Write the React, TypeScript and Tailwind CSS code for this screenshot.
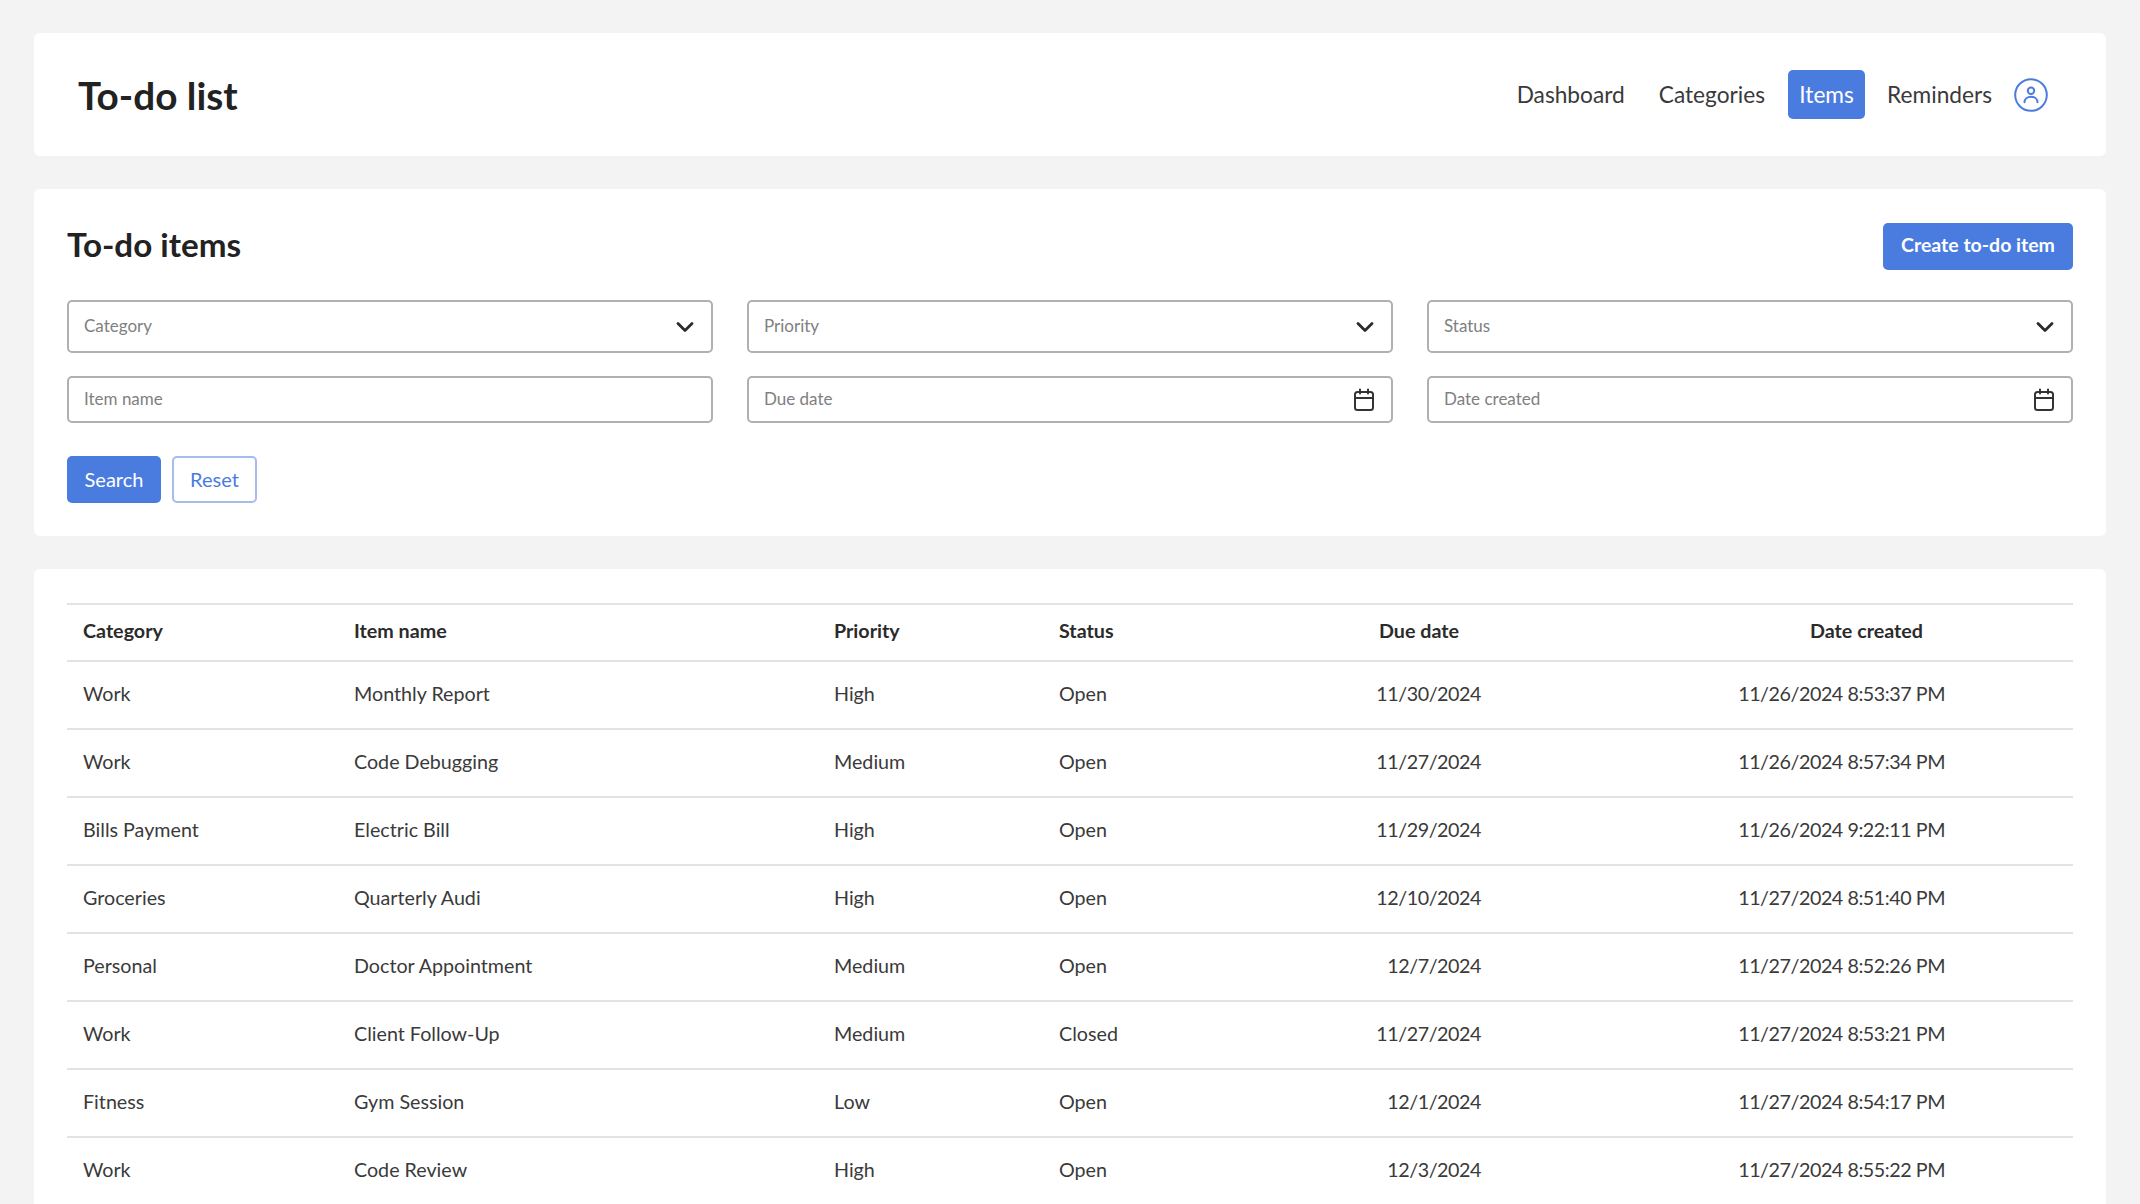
import { ChevronDown } from 'lucide-react'

const rows = [
  ['Work', 'Monthly Report', 'High', 'Open', '11/30/2024', '11/26/2024 8:53:37 PM'],
  ['Work', 'Code Debugging', 'Medium', 'Open', '11/27/2024', '11/26/2024 8:57:34 PM'],
  ['Bills Payment', 'Electric Bill', 'High', 'Open', '11/29/2024', '11/26/2024 9:22:11 PM'],
  ['Groceries', 'Quarterly Audi', 'High', 'Open', '12/10/2024', '11/27/2024 8:51:40 PM'],
  ['Personal', 'Doctor Appointment', 'Medium', 'Open', '12/7/2024', '11/27/2024 8:52:26 PM'],
  ['Work', 'Client Follow-Up', 'Medium', 'Closed', '11/27/2024', '11/27/2024 8:53:21 PM'],
  ['Fitness', 'Gym Session', 'Low', 'Open', '12/1/2024', '11/27/2024 8:54:17 PM'],
  ['Work', 'Code Review', 'High', 'Open', '12/3/2024', '11/27/2024 8:55:22 PM'],
]

function CalendarIcon() {
  return (
    <svg viewBox="0 0 22 24" className="w-[22px] h-6 text-[#333]" fill="none" stroke="currentColor" strokeWidth="2" strokeLinecap="round">
      <rect x="2" y="4" width="18" height="18" rx="2.5" />
      <path d="M2 10h18M7 1.500v4M15 1.500v4" />
    </svg>
  )
}

function UserIcon() {
  return (
    <svg viewBox="0 0 34 34" className="w-[34px] h-[34px] text-[#4a7cdf]" fill="none" stroke="currentColor" strokeWidth="2" strokeLinecap="round">
      <circle cx="17" cy="17" r="15.8" />
      <circle cx="17" cy="12.700" r="3.200" />
      <path d="M10.500 24.300c0-3.500 3-5.500 6.500-5.500s6.500 2 6.500 5.500" />
    </svg>
  )
}

function SelectBox({ label }: { label: string }) {
  return (
    <div className="h-[53px] flex items-center justify-between pl-[15px] pr-[12px] bg-white border-2 border-[#b0b0b0] rounded-[5px]">
      <span className="text-[17px] text-[#808080] pb-px">{label}</span>
      <ChevronDown className="w-7 h-7 text-[#2b2b2b]" strokeWidth={2.4} />
    </div>
  )
}

function InputBox({ label, calendar }: { label: string; calendar?: boolean }) {
  return (
    <div className="h-[47px] flex items-center justify-between pl-[15px] pr-[16px] bg-white border-2 border-[#b0b0b0] rounded-[5px]">
      <span className="text-[17px] text-[#808080] pb-px">{label}</span>
      {calendar && <CalendarIcon />}
    </div>
  )
}

export default function App() {
  return (
    <div className="h-screen overflow-hidden bg-[#f3f3f3] px-[34px] pt-[33px] flex flex-col gap-[33px] text-[#3a3a3a] font-['Lato',sans-serif]">
      <header className="h-[123px] shrink-0 bg-white rounded-[6px] flex items-center justify-between pl-[44px] pr-[58px]">
        <h1 className="text-[38.7px] font-bold text-[#222] pt-px">To-do list</h1>
        <nav className="flex items-center text-[22.7px]">
          <a className="mr-[34px] pt-[2px]">Dashboard</a>
          <a className="mr-[23px] pt-[2px]">Categories</a>
          <a className="mr-[22px] h-[49px] w-[77px] pt-[2px] flex items-center justify-center bg-[#4a7cdf] text-white rounded-[5px]">Items</a>
          <a className="mr-[22px] pt-[2px]">Reminders</a>
          <UserIcon />
        </nav>
      </header>

      <section className="h-[347px] shrink-0 bg-white rounded-[6px] px-[33px] pt-[34px]">
        <div className="flex items-center justify-between h-[47px]">
          <h2 className="text-[33.2px] font-bold text-[#222] pb-[4px]">To-do items</h2>
          <button className="h-[47px] w-[190px] pb-[3px] bg-[#4a7cdf] text-white text-[19.5px] font-bold rounded-[5px]">Create to-do item</button>
        </div>
        <div className="grid grid-cols-3 gap-x-[34px] gap-y-[23px] mt-[30px]">
          <SelectBox label="Category" />
          <SelectBox label="Priority" />
          <SelectBox label="Status" />
          <InputBox label="Item name" />
          <InputBox label="Due date" calendar />
          <InputBox label="Date created" calendar />
        </div>
        <div className="flex gap-[11px] mt-[33px]">
          <button className="h-[47px] w-[94px] pb-[2px] bg-[#4a7cdf] text-white text-[20px] rounded-[5px]">Search</button>
          <button className="h-[47px] w-[85px] pb-[2px] bg-white border-2 border-[#a5bcec] text-[#4a7cdf] text-[20px] rounded-[5px]">Reset</button>
        </div>
      </section>

      <section className="flex-1 bg-white rounded-t-[6px] px-[33px] pt-[34px]">
        <table className="w-full table-fixed border-collapse text-[19.7px]">
          <colgroup>
            <col className="w-[270px]" />
            <col className="w-[481px]" />
            <col className="w-[224px]" />
            <col className="w-[299px]" />
            <col className="w-[156px]" />
            <col />
          </colgroup>
          <thead>
            <tr className="h-[57px] border-y-2 border-[#e3e3e3] text-[#2b2b2b]">
              <th className="pl-4 pb-[3px] text-left font-bold">Category</th>
              <th className="pl-[17px] pb-[3px] text-left font-bold">Item name</th>
              <th className="pl-4 pb-[3px] text-left font-bold">Priority</th>
              <th className="pl-[17px] pb-[3px] text-left font-bold">Status</th>
              <th className="pr-[38px] pb-[3px] text-right font-bold">Due date</th>
              <th className="pr-[150px] pb-[3px] text-right font-bold">Date created</th>
            </tr>
          </thead>
          <tbody>
            {rows.map((r, i) => (
              <tr key={i} className="h-[68px] border-b-2 border-[#e3e3e3]">
                <td className="pl-4 pb-[3px]">{r[0]}</td>
                <td className="pl-[17px] pb-[3px]">{r[1]}</td>
                <td className="pl-4 pb-[3px]">{r[2]}</td>
                <td className="pl-[17px] pb-[3px]">{r[3]}</td>
                <td className="pr-4 pb-[3px] text-right tracking-[-0.45px]">{r[4]}</td>
                <td className="pr-[128px] pb-[3px] text-right tracking-[-0.45px]">{r[5]}</td>
              </tr>
            ))}
          </tbody>
        </table>
      </section>
    </div>
  )
}
